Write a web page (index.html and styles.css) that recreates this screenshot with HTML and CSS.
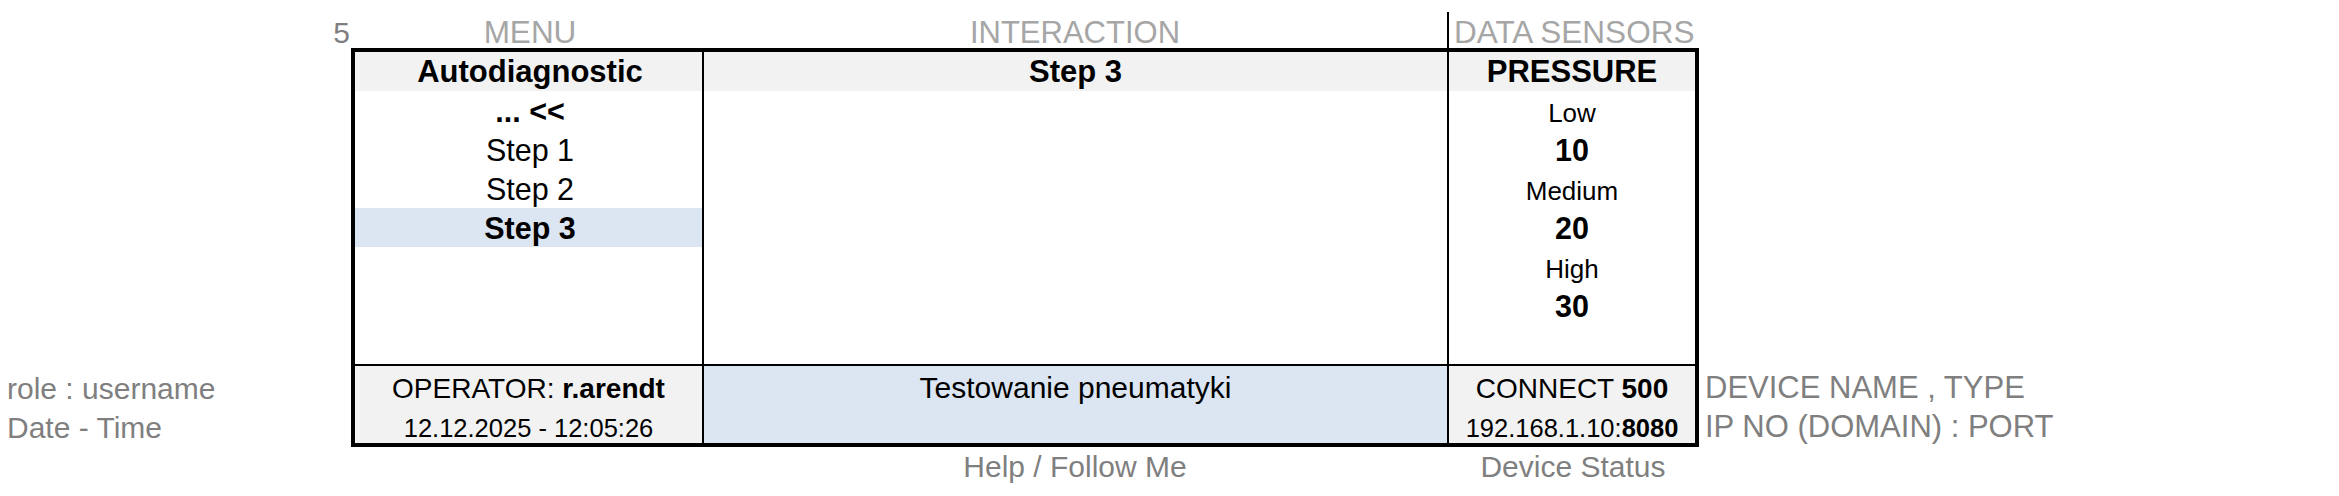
FILE: index.html
```html
<!DOCTYPE html>
<html lang="en">
<head>
<meta charset="utf-8">
<title>Autodiagnostic</title>
<link rel="stylesheet" href="styles.css">
</head>
<body>
<div class="sheet">
  <div class="corner">5</div>
  <div class="label label-menu">MENU</div>
  <div class="label">INTERACTION</div>
  <div class="label label-data">DATA SENSORS</div>

  <div class="side side-left">
    <div class="side-line">role : username</div>
    <div class="side-line">Date - Time</div>
  </div>

  <div class="board">
    <div class="col col-menu">
      <div class="cell head">Autodiagnostic</div>
      <div class="cell bold">... &lt;&lt;</div>
      <div class="cell">Step 1</div>
      <div class="cell">Step 2</div>
      <div class="cell bold active">Step 3</div>
    </div>
    <div class="col col-interaction">
      <div class="cell head">Step 3</div>
    </div>
    <div class="col col-data">
      <div class="cell head">PRESSURE</div>
      <div class="cell small">Low</div>
      <div class="cell bold">10</div>
      <div class="cell small">Medium</div>
      <div class="cell bold">20</div>
      <div class="cell small">High</div>
      <div class="cell bold">30</div>
    </div>

    <div class="foot foot-grey">
      <div class="foot-line mid">OPERATOR: <b>r.arendt</b></div>
      <div class="foot-line tiny">12.12.2025 - 12:05:26</div>
    </div>
    <div class="foot foot-blue">
      <div class="foot-line">Testowanie pneumatyki</div>
    </div>
    <div class="foot foot-grey">
      <div class="foot-line mid">CONNECT <b>500</b></div>
      <div class="foot-line tiny">192.168.1.10:<b>8080</b></div>
    </div>
  </div>

  <div class="side side-right">
    <div class="side-line">DEVICE NAME , TYPE</div>
    <div class="side-line">IP NO (DOMAIN) : PORT</div>
  </div>

  <div class="caption caption-help">Help / Follow Me</div>
  <div class="caption caption-status">Device Status</div>
</div>
</body>
</html>
```

FILE: styles.css
```css
html, body {
  margin: 0;
  padding: 0;
  background: #ffffff;
}

body {
  font-family: "Liberation Sans", Arial, sans-serif;
  color: #000000;
  font-size: 30px;
}

.sheet {
  display: grid;
  grid-template-columns: 351px 352px 744px 252px 1fr;
  grid-template-rows: 36px 399px auto;
  padding-top: 12px;
}

.corner {
  grid-column: 1;
  grid-row: 1;
  display: flex;
  align-items: flex-end;
  justify-content: flex-end;
  padding-right: 1px;
  line-height: 1;
  color: #7f7f7f;
}

.label {
  grid-row: 1;
  display: flex;
  align-items: flex-end;
  justify-content: center;
  font-size: 31px;
  line-height: 1;
  color: #a6a6a6;
  white-space: nowrap;
}

.label-menu {
  padding-left: 6px;
  font-size: 31.5px;
}

.label-data {
  justify-content: flex-start;
  border-left: 2px solid #000000;
  padding-left: 5px;
  font-size: 31.5px;
}

.side {
  grid-row: 2;
  display: flex;
  flex-direction: column;
  justify-content: flex-end;
  padding-bottom: 2px;
  color: #7f7f7f;
  white-space: nowrap;
}

.side-left {
  grid-column: 1;
  padding-left: 7px;
}

.side-right {
  grid-column: 5;
  padding-left: 6px;
  font-size: 31px;
}

.side-line {
  height: 39px;
  display: flex;
  align-items: flex-end;
  box-sizing: border-box;
}

.board {
  grid-column: 2 / 5;
  grid-row: 2;
  border: 4px solid #000000;
  display: grid;
  grid-template-columns: 347px 745px 1fr;
  grid-template-rows: 312px 79px;
}

.col {
  display: flex;
  flex-direction: column;
}

.col + .col {
  border-left: 2px solid #000000;
}

.cell {
  height: 39px;
  flex: none;
  box-sizing: border-box;
  display: flex;
  align-items: flex-end;
  justify-content: center;
  padding-bottom: 1px;
  font-size: 30.5px;
  white-space: nowrap;
}

.col-menu .cell {
  padding-left: 3px;
}

.cell.head {
  height: 39px;
  background: #f2f2f2;
  font-weight: bold;
  font-size: 31px;
}

.cell.bold {
  font-weight: bold;
}

.cell.small {
  font-size: 26px;
  padding-bottom: 1px;
}

.cell.active {
  background: #dce6f2;
}

.foot {
  border-top: 2px solid #000000;
  display: flex;
  flex-direction: column;
}

.foot + .foot {
  border-left: 2px solid #000000;
}

.foot-grey {
  background: #f2f2f2;
}

.foot-blue {
  background: #dce6f2;
}

.foot-line {
  height: 38.5px;
  box-sizing: border-box;
  display: flex;
  align-items: flex-end;
  justify-content: center;
  padding-bottom: 0;
  white-space: pre;
}

.foot-line.mid {
  font-size: 28px;
}

.foot-line.tiny {
  font-size: 25.5px;
}

.caption {
  grid-row: 3;
  padding-top: 3px;
  text-align: center;
  color: #7f7f7f;
  white-space: nowrap;
}

.caption-help {
  grid-column: 3;
}

.caption-status {
  grid-column: 4;
}
```
